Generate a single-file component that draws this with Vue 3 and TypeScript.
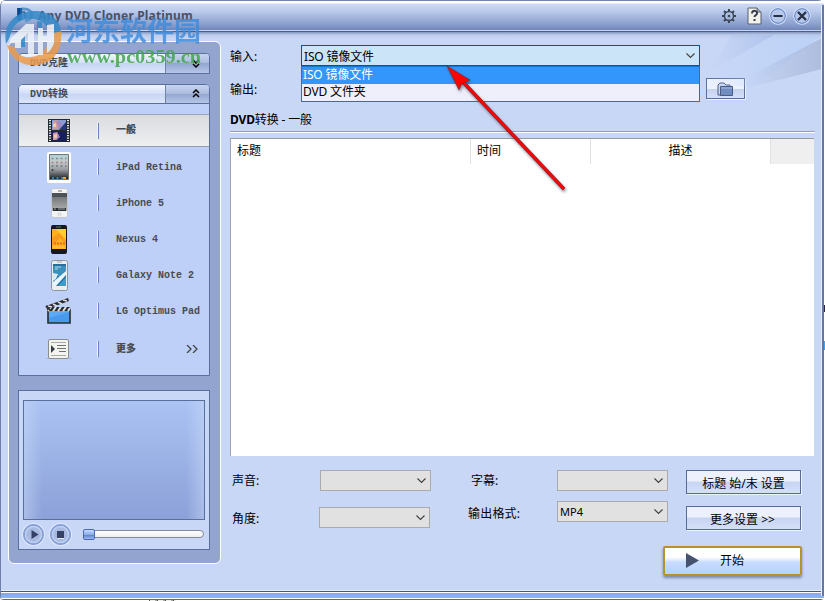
<script setup lang="ts">
import { ref } from 'vue'

interface Profile {
  id: string
  label: string
}

const profiles: Profile[] = [
  { id: 'film', label: '一般' },
  { id: 'ipad', label: 'iPad Retina' },
  { id: 'iphone', label: 'iPhone 5' },
  { id: 'nexus', label: 'Nexus 4' },
  { id: 'galaxy', label: 'Galaxy Note 2' },
  { id: 'clapper', label: 'LG Optimus Pad' },
]
const selected = ref('film')
const sources: string[] = ['ISO 镜像文件', 'DVD 文件夹']
const source = ref(sources[0])
</script>

<template>
  <div class="window">
    <header class="titlebar">
      <svg class="logo" width="18" height="18" viewBox="0 0 18 18">
        <path d="M5 2h3c10 0 10 11 1 12" fill="none" stroke="#5f93c8" stroke-width="3" />
        <path d="M1 1h5v11l-3 2-2-2z" fill="#1560aa" />
        <path d="M3 1v9M6 5h3v6" stroke="#092a58" fill="none" />
      </svg>
      <h1>Any DVD Cloner Platinum</h1>
      <div class="tools">
        <svg class="gear" width="16" height="16" viewBox="0 0 16 16">
          <g fill="none" stroke="#3c4656">
            <circle cx="8" cy="8" r="4.600" stroke-width="1.500" />
            <path d="M8 1v2.500M8 12.500v2.500M1 8h2.500M12.500 8h2.500M3 3l2 2M11 11l2 2M3 13l2-2M11 5l2-2" stroke-width="2" />
          </g>
          <circle cx="8" cy="8" r="1.300" fill="#3c4656" />
        </svg>
        <svg class="help" width="15" height="18" viewBox="0 0 15 18">
          <path d="M1 1h9l4 4v12H1z" fill="#f2f1e9" stroke="#58606f" />
          <path d="M10 1v4h4" fill="#a9b0b8" stroke="#58606f" />
          <path d="M5 6.500c0-4 5.500-3 5 0 0 1.500-2.500 1.500-2.500 3.500M7.500 12v2" fill="none" stroke="#333b4d" stroke-width="2" />
        </svg>
        <svg class="min" width="18" height="18" viewBox="0 0 18 18">
          <circle cx="9" cy="9" r="8" fill="#b6c7ea" stroke="#d4e2ff" stroke-width="1.500" />
          <circle cx="9" cy="9" r="7.300" fill="none" stroke="#5b7cbb" />
          <path d="M4.500 9h9" stroke="#263044" stroke-width="2" />
        </svg>
        <svg class="close" width="18" height="18" viewBox="0 0 18 18">
          <circle cx="9" cy="9" r="8" fill="#b6c7ea" stroke="#d4e2ff" stroke-width="1.500" />
          <circle cx="9" cy="9" r="7.300" fill="none" stroke="#5b7cbb" />
          <path d="M5 5l8 8M13 5l-8 8" stroke="#263044" stroke-width="2.300" />
        </svg>
      </div>
    </header>

    <div class="body">
      <aside class="sidebar">
        <button class="section"><span>DVD克隆</span><i><svg width="8" height="10" viewBox="0 0 8 10"><path d="M1 1l3 3 3-3M1 5l3 3 3-3" /></svg></i></button>
        <section class="profiles">
          <button class="section"><span>DVD转换</span><i><svg width="8" height="10" viewBox="0 0 8 10"><path d="M1 4l3-3 3 3M1 8l3-3 3 3" /></svg></i></button>
          <ul>
            <li v-for="p in profiles" :key="p.id" :class="{ active: selected === p.id }" @click="selected = p.id">
              <span class="icon">
                <svg v-if="p.id === 'film'" width="22" height="23" viewBox="0 0 22 23">
                  <path d="M0 0h22v23H0z" fill="#24292f" />
                  <path d="M2 1v21M20 1v21" stroke="#eee" stroke-width="2" stroke-dasharray="1.2 1.3" />
                  <path d="M4 1h14v10H4z" fill="#8c9bd2" /><path d="M4 13h14v9H4z" fill="#17205a" />
                  <path d="M5 2l4-1 3 5-3 4H5zM5 14l4-1 2 4-2 4H5z" fill="#d29aa0" />
                  <path d="M8 2l4 1 2 4-3 3zM9 13l3 5-4 3z" fill="#a487bd" /><path d="M18 3v8h-7z" fill="#243778" />
                  <path d="M5 5l3-1v4H5zM6 16l3-1v4H6z" fill="#f0cbaa" />
                </svg>
                <svg v-else-if="p.id === 'ipad'" width="24" height="31" viewBox="0 0 24 31">
                  <defs><linearGradient id="pad" x2="0" y2="1"><stop stop-color="#b3d5d6" /><stop offset=".3" stop-color="#c4c8ca" /><stop offset=".6" stop-color="#999da0" /><stop offset="1" stop-color="#171b20" /></linearGradient></defs>
                  <rect width="24" height="31" rx="2" fill="#fff" /><path d="M2.500 2.500h19v25h-19z" fill="url(#pad)" stroke="#6c7579" />
                  <g stroke-width="1.600" stroke-dasharray="2 2.500"><path d="M4.500 6.500h15" stroke="#7c8b94" /><path d="M4.500 10.500h15" stroke="#a57f85" /><path d="M4.500 14h15" stroke="#6d7984" /><path d="M4.500 18h3" stroke="#333" /><path d="M5 26h14" stroke="#24a7dd" /></g>
                  <path d="M16 26h3" stroke="#f6a51c" stroke-width="2" />
                </svg>
                <svg v-else-if="p.id === 'iphone'" width="17" height="30" viewBox="0 0 17 30">
                  <defs><linearGradient id="phone" x2="0" y2="1"><stop stop-color="#4f5357" /><stop offset=".2" stop-color="#4b5055" /><stop offset=".25" stop-color="#77797b" /><stop offset="1" stop-color="#b2b3b3" /></linearGradient></defs>
                  <rect x=".5" y=".5" width="16" height="29" rx="2" fill="#f3f3f3" stroke="#c3c6cb" /><path d="M1 5h15v18H1z" fill="url(#phone)" /><path d="M2 20h13v3H2z" fill="#292e34" /><path d="M3 21h2M7 21h7" stroke="#a5a8aa" /><path d="M7 3h4" stroke="#777" /><circle cx="8.500" cy="26.200" r="1.600" fill="#e5e5e5" stroke="#c4c4c4" stroke-width=".5" />
                </svg>
                <svg v-else-if="p.id === 'nexus'" width="16" height="29" viewBox="0 0 16 29">
                  <rect width="16" height="29" rx="2" fill="#18191c" /><path d="M1 4h14v20H1z" fill="#ffb21b" /><path d="M5 4l10 10V4z" fill="#ffcf32" /><path d="M1 13l7-5 7 8v3l-6-6-8 8z" fill="#f99a20" /><path d="M2 22h12" stroke="#f5d06a" stroke-dasharray="2 1" /><path d="M5 2h5" stroke="#6e7071" /><path d="M3 18.500h11" stroke="#ed6526" stroke-width="2" stroke-dasharray="2 1" />
                </svg>
                <svg v-else-if="p.id === 'galaxy'" width="17" height="31" viewBox="0 0 17 31">
                  <rect x=".5" y=".5" width="16" height="30" rx="2" fill="#e9eff1" stroke="#8e969a" /><path d="M2 4h13v22H2z" fill="#286f9e" /><path d="M2 6h13v5l-7 6-6-4z" fill="#3b91bd" /><path d="M2 22L15 11v4L5 26H2z" fill="#e7f7fb" /><path d="M2 13l5 1-2 5-3 2z" fill="#d5ecf3" /><path d="M7 26l8-9v9z" fill="#3d9dcb" /><path d="M4 7h6M4 9h3" stroke="#b8d9e8" /><path d="M6 2h5" stroke="#aaa" />
                </svg>
                <svg v-else class="clapper" width="27" height="27" viewBox="0 0 27 27">
                  <path d="M3 11h22v14H3z" fill="#5caaf4" stroke="#252b32" stroke-width="1.600" /><path d="M4 20l20-6v10H4z" fill="#3387e8" opacity=".45" />
                  <path d="M2 9h23v4H2z" fill="#24282c" /><path d="M3 13l3-4M8 13l3-4M13 13l3-4M18 13l3-4M23 13l2-3" stroke="#e2e2e2" stroke-width="2" />
                  <path d="M1 8L23 0l1 3L2 11z" fill="#282b2d" /><path d="M3 8l4 1M8 6l4 2M13 4l4 2M18 2l4 1" stroke="#ddd" stroke-width="1.800" /><path d="M1 8l4 4" stroke="#333" stroke-width="2" />
                </svg>
              </span><b>{{ p.label }}</b>
            </li>
            <li class="more"><span class="icon"><svg width="28" height="21" viewBox="0 0 28 21"><path d="M1 19.500h26" stroke="#99aac9" opacity=".6" /><rect x="3.500" y=".5" width="20" height="19" rx="1.500" fill="#f4f4ee" stroke="#888d8e" /><path d="M6 3.500h15M6 16.500h15" stroke="#aaa" /><path d="M6 6v8l4-4z" fill="#333b44" /><path d="M12 6.500h9M12 9.500h9M14 12.500h7" stroke="#6e7376" /></svg></span><b>更多</b><svg class="chevrons" width="12" height="8" viewBox="0 0 12 8"><path d="M1 0l4 4-4 4M7 0l4 4-4 4" /></svg></li>
          </ul>
        </section>
        <section class="preview">
          <div class="screen"></div>
          <div class="player">
            <button class="round"><svg width="20" height="20"><path d="M7.500 5v9l7-4.500z" fill="#344165" /></svg></button>
            <button class="round"><svg width="20" height="20"><path d="M6 6h7v7H6z" fill="#344165" /><path d="M6 13.500h7" stroke="#e1eaff" /></svg></button>
            <div class="seek"><span></span></div>
          </div>
        </section>
      </aside>

      <main>
        <svg class="rays" width="132" height="55" viewBox="0 0 132 55">
          <defs>
            <linearGradient id="ray"><stop stop-color="#a5bce8" stop-opacity="0" /><stop offset="1" stop-color="#9eb7e8" /></linearGradient>
            <linearGradient id="ray2"><stop stop-color="#b7d1f8" stop-opacity="0" /><stop offset="1" stop-color="#b1cdf7" /></linearGradient>
            <linearGradient id="ray3"><stop offset=".2" stop-color="#9faed0" stop-opacity="0" /><stop offset="1" stop-color="#a2b0d2" /></linearGradient>
          </defs>
          <path d="M42 2h42L19 39z" fill="url(#ray)" opacity=".6" /><path d="M84 2h48L65 53H10l9-14z" fill="url(#ray2)" opacity=".6" /><path d="M132 5v31L65 53H40z" fill="url(#ray3)" opacity=".7" />
        </svg>
        <div class="paths">
          <div class="labels"><label>输入:</label><label>输出:</label></div>
          <div class="source">
            <div class="combo"><span>{{ source }}</span><svg width="9" height="6" viewBox="0 0 9 6"><path d="M.5 .5l4 4 4-4" /></svg></div>
            <div class="options"><div v-for="s in sources" :key="s" :class="{ chosen: s === source }" @click="source = s">{{ s }}</div></div>
          </div>
          <button class="browse"><svg width="17" height="15" viewBox="0 0 17 15"><path d="M1 13V3l2-2h4l2 2h4v10z" fill="#c8d7ef" stroke="#4a5b82" /><path d="M3.500 4.500h12v9h-12z" fill="#718cc0" stroke="#4a5b82" /><path d="M4 6h11" stroke="#a6bce3" /></svg></button>
        </div>
        <h2><strong>DVD</strong>转换 - 一般</h2>
        <div class="table"><div class="head"><span>标题</span><span>时间</span><span>描述</span><span></span></div></div>
        <div class="form">
          <div class="labels-a"><label>声音:</label><label>角度:</label></div>
          <div class="selects-a"><div class="select"><span></span><svg width="9" height="6" viewBox="0 0 9 6"><path d="M.5 .5l4 4 4-4" /></svg></div><div class="select second"><span></span><svg width="9" height="6" viewBox="0 0 9 6"><path d="M.5 .5l4 4 4-4" /></svg></div></div>
          <div class="labels-b"><label>字幕:</label><label>输出格式:</label></div>
          <div class="selects-b"><div class="select"><span></span><svg width="9" height="6" viewBox="0 0 9 6"><path d="M.5 .5l4 4 4-4" /></svg></div><div class="select"><span class="format">MP4</span><svg width="9" height="6" viewBox="0 0 9 6"><path d="M.5 .5l4 4 4-4" /></svg></div></div>
          <div class="actions"><button>标题 始/末 设置</button><button>更多设置 &gt;&gt;</button></div>
        </div>
        <button class="start"><svg width="13" height="15"><path d="M0 0v15l13-7.500z" fill="#46536e" /></svg><span>开始</span></button>
      </main>
    </div>
    <footer></footer>

    <svg class="watermark" width="210" height="70" viewBox="0 0 210 70">
      <g opacity=".85">
        <path d="M6 44C2 23 17 11 34 11c15 0 26 8 27 20L49 34c-1-7-5-12-11-14-13-4-24 2-27 13-1 4-3 8-5 11z" fill="#3489c8" />
        <path d="M7 45c4 16 18 22 32 20 15-3 24-15 22-34l-12 4c0 11-6 21-18 22-10 1-15-4-16-10l-4-1z" fill="#ec9a4c" />
        <path d="M20 32h5v15h-5zM37 21l5 1v12h-5z" fill="#3489c8" />
        <path d="M10 39l16-15h8v31h-6V33l-7 7v8h-6v-5h-5z" fill="#eef3f7" />
        <path d="M38 28h5v8h4V25l7-1v19c-2 5-4 8-7 10V41h-4v14h-5z" fill="#eef3f7" />
      </g>
      <text class="mark-name" x="66" y="41" textLength="135">河东软件园</text>
      <text class="mark-url" x="67" y="63" textLength="134" lengthAdjust="spacingAndGlyphs">www.pc0359.cn</text>
    </svg>
    <svg class="arrow" width="130" height="135" viewBox="0 0 130 135">
      <path d="M18 17l101 107" stroke="#6b2633" stroke-width="3.600" /><path d="M18 17l101 107" stroke="#fa0504" stroke-width="2.700" /><path d="M2 1l23 14-5 2-4 3-2 5z" fill="#fa0500" stroke="#5b2633" stroke-width=".5" />
    </svg>
  </div>
</template>

<style>
body {
  margin: 0;
  height: 601px;
  overflow: hidden;
  background:
    linear-gradient(#2b2140, #2b2140) 824px 305px / 1px 7px no-repeat,
    linear-gradient(#3da4f2, #3da4f2) 824px 341px / 1px 9px no-repeat,
    repeating-linear-gradient(90deg, #555 0 1px, #eee 1px 6px, #aaa 6px 8px) 149px 600px / 27px 1px no-repeat,
    #fff;
}
</style>
<style scoped>
* { box-sizing: border-box; }
.window { position: relative; display: flex; flex-direction: column; width: 824px; height: 600px; overflow: hidden; border-left: 1px solid #6d7fae; border-radius: 6px 6px 4px 4px; background: #c9d7f6; font: 12px/16px "Noto Sans", "Noto Sans CJK SC", sans-serif; color: #000; }
.window::after { content: ""; position: absolute; right: 0; top: 5px; bottom: 4px; width: 2px; border-left: 1px solid #e8f0ff; background: #6577a9; }
button { padding: 0; font: inherit; color: inherit; }
svg { flex-shrink: 0; }
.titlebar { display: flex; align-items: center; height: 32px; padding: 0 13px 1px 15px; border-top: 1px solid #7283ad; border-bottom: 1px solid #4d5e89; background: linear-gradient(#fff 0 2px, #ced9f4 3px, #bccbed 10px, #889dcc 24px, #7186b6 29px, #c6d5f4 29px); }
.titlebar h1 { margin: 0 auto 0 4px; font: bold 12px/16px "Noto Sans", sans-serif; letter-spacing: .17px; color: #4a5166; white-space: nowrap; }
.tools { display: flex; align-items: center; }
.help { margin-left: 10px; }
.min { margin-left: 7px; }
.close { margin-left: 6px; }
.body { display: flex; height: 558px; background: linear-gradient(#8295c0 0, #becce8 3px, #c9d7f6 7px); }
.sidebar { width: 213px; height: 523px; margin: 9px 0 0 7px; padding: 11px 10px 13px 9px; border: 1px solid #fff; border-radius: 6px; background: #93a5cf; }
.section { display: flex; width: 192px; height: 21px; border: 1px solid #596f9e; border-radius: 4px 4px 0 0; overflow: hidden; background: linear-gradient(#f2f6ff, #d1def7 48%, #c6d5f4 50%, #dce6fb); font: bold 10px/19px "Liberation Mono", "Noto Sans CJK SC", monospace; color: #444a55; text-align: left; }
.section span { width: 147px; padding-left: 11px; border-right: 1px solid #7182a8; }
.section i { display: flex; flex: 1; align-items: center; padding-left: 26px; background: linear-gradient(#c7d4ef, #aabcdd 48%, #91a6d1 50%, #b6c6e6); }
.section i svg { fill: none; stroke: #000; stroke-width: 1.5; }
.profiles { width: 192px; height: 292px; margin-top: 10px; border: 1px solid #596f9e; border-radius: 5px 5px 0 0; background: #bfd0f8; }
.profiles .section { width: 190px; height: 19px; border-width: 0 0 1px; }
ul { margin: 10px 0 0; padding: 0; list-style: none; }
li { display: flex; align-items: center; height: 36px; font: bold 10px/16px "Liberation Mono", "Noto Sans CJK SC", monospace; color: #494b50; }
li.active { height: 33px; border-top: 1px solid #9ca5b4; border-bottom: 1px solid #939dab; background: linear-gradient(#d9dbe0, #eeeff0); }
li.active + li { margin-top: 2px; }
.icon { display: flex; align-items: center; justify-content: center; width: 80px; height: 16px; padding-left: 1px; border-right: 1px solid #6883bd; box-shadow: inset -1px 0 #edf3ff; }
.clapper { margin-left: -2px; }
li b { margin-left: 17px; padding-top: 1px; white-space: nowrap; }
.more { margin-top: 2px; }
.chevrons { margin-left: 50px; fill: none; stroke: #444; stroke-width: 1.3; }
.preview { width: 192px; height: 160px; margin-top: 14px; padding: 9px 4px; border: 1px solid #596f9e; background: #c9d7f6; }
.screen { height: 120px; border: 1px solid #596f9e; background: linear-gradient(90deg, #c9d9f880, transparent 10% 90%, #c9d9f880), linear-gradient(#aac3f3, #8ca1d8); }
.player { display: flex; align-items: center; gap: 6px; height: 28px; }
.round { display: grid; width: 21px; height: 21px; border: 1px solid #7a96d0; border-radius: 50%; box-shadow: 0 0 0 1px #dfe9ff; background: radial-gradient(circle, #a7b9e0 45%, #c3d2f0 62%, #8ba4d8 67%, #c8d8f5); place-items: center; }
.seek { display: flex; align-items: center; width: 121px; height: 8px; margin-left: 6px; border: 1px solid #858b99; border-radius: 4px; background: linear-gradient(#fff, #eee); }
.seek span { width: 12px; height: 11px; margin-left: -1px; border: 1px solid #4968b8; border-radius: 2px; background: linear-gradient(#c7dcff, #8baee9 50%, #577dcc 52%, #9dbcf0); }
main { position: relative; flex: 1; min-width: 0; padding: 13px 9px 0 9px; }
.rays { position: absolute; right: 2px; top: 1px; pointer-events: none; }
.paths { display: flex; height: 57px; }
.labels { display: grid; grid-template-rows: 23px 44px; align-items: center; width: 71px; height: 57px; }
.source { width: 399px; height: 57px; }
.combo, .select { display: flex; align-items: center; justify-content: space-between; height: 21px; padding: 0 4px 0 2px; border: 1px solid #0d5397; background: #cce4f8; }
.combo span { padding-top: 2px; }
.combo svg, .select svg { fill: none; stroke: #444; stroke-width: 1.2; }
.combo, .options { letter-spacing: -.15px; }
.options { height: 36px; border: 1px solid #1478cf; background: #eeeffb; }
.options div { height: 17px; padding-left: 1px; line-height: 16px; }
.options .chosen { background: #3296fc; color: #fff; }
.browse { display: grid; width: 39px; height: 21px; margin: 33px 0 0 6px; place-items: center; border: 1px solid #59709e; background: linear-gradient(#edf2ff 50%, #c5d2ee 52%, #d5e0f8); box-shadow: 1px 1px #edf2ff; }
.browse svg { margin-top: 1px; }
h2 { height: 30px; margin: 0; padding-top: 10px; border-bottom: 1px solid #9b9ea7; box-shadow: 0 1px #fff; font: 12px/16px "Noto Sans", "Noto Sans CJK SC", sans-serif; letter-spacing: -.15px; }
.table { width: 584px; height: 318px; margin-top: 6px; border-top: 1px solid #999; border-left: 1px solid #a5a5a5; background: #fff; }
.head { display: grid; grid-template-columns: 240px 120px 180px 43px; height: 25px; line-height: 24px; }
.head span { padding-left: 6px; border-right: 1px solid #e1e1e1; }
.head span:nth-child(3) { padding: 0; text-align: center; }
.head span:last-child { border: 0; background: #efefef; }
.form { display: flex; height: 90px; padding-top: 14px; }
.labels-a { display: grid; grid-template-rows: 21px 55px; align-items: center; width: 89px; height: 76px; padding-left: 2px; }
.labels-b { display: grid; grid-template-rows: 21px 45px; align-items: center; width: 89px; height: 66px; margin-left: 37px; white-space: nowrap; }
.labels-b label:first-child { margin-left: 3px; }
.labels-b label:last-child { letter-spacing: .2px; }
.select { width: 111px; border-color: #aaa; background: #e1e1e1; }
.format { font-size: 11px; }
.selects-a { width: 112px; padding-left: 1px; }
.selects-a .second { margin: 16px 0 0 -1px; }
.selects-b { display: grid; align-content: start; gap: 10px; }
.actions { display: grid; align-content: start; gap: 12px; margin-left: 18px; }
.actions button { width: 115px; height: 24px; padding-top: 3px; border: 1px solid #536b9d; background: linear-gradient(#edf1fe 45%, #c7d5f3 50%, #d5e0f7); box-shadow: 1px 1px #edf2ff; }
.actions button:last-child { padding-right: 2px; }
.start { display: flex; align-items: center; width: 139px; height: 30px; margin-left: 433px; padding-left: 21px; border: 2px solid #b59427; border-radius: 2px; background: linear-gradient(#fff 35%, #c7dcff 55%, #b9d0ff); box-shadow: 0 2px 3px #7788aa; }
.start svg { margin-top: -2px; }
.start span { margin: -1px 0 0 21px; }
footer { height: 10px; margin-top: auto; border-bottom: 1px solid #536a9f; background: linear-gradient(#e8f0ff 0 1px, #455983 1px 2px, #fff 2px 3px, #88a6ed 3px, #92b1ff 8px, #fff 8px); }
.watermark { position: absolute; left: -1px; top: 0; pointer-events: none; }
.mark-name { font: bold 27px "Noto Sans CJK SC", sans-serif; fill: #3c8bdd; opacity: .8; }
.mark-url { font: bold 18px "Liberation Serif", serif; fill: #43a650; opacity: .85; }
.arrow { position: absolute; left: 444px; top: 65px; pointer-events: none; filter: drop-shadow(1px 2px 1.5px #33445599); }
</style>
